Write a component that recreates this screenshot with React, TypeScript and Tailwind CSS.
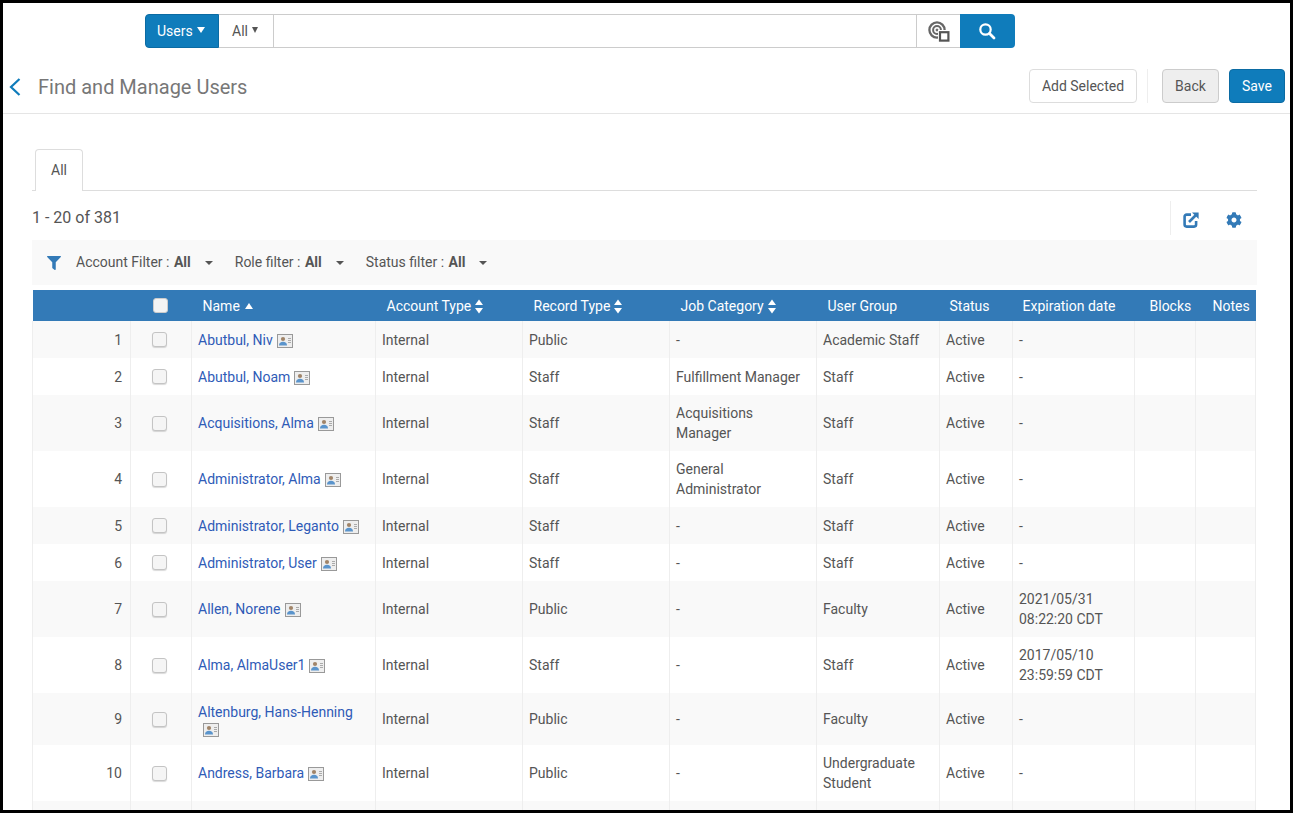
import { FaCog, FaFilter } from 'react-icons/fa';

type UserRow = {
  name: string;
  record: string;
  job: string;
  group: string;
  expiry: string;
  height: string;
  wrapIcon?: boolean;
};

const users: UserRow[] = [
  { name: 'Abutbul, Niv', record: 'Public', job: '-', group: 'Academic Staff', expiry: '-', height: 'h-[37px]' },
  { name: 'Abutbul, Noam', record: 'Staff', job: 'Fulfillment Manager', group: 'Staff', expiry: '-', height: 'h-[37px]' },
  { name: 'Acquisitions, Alma', record: 'Staff', job: 'Acquisitions Manager', group: 'Staff', expiry: '-', height: 'h-[56px]' },
  { name: 'Administrator, Alma', record: 'Staff', job: 'General Administrator', group: 'Staff', expiry: '-', height: 'h-[56px]' },
  { name: 'Administrator, Leganto', record: 'Staff', job: '-', group: 'Staff', expiry: '-', height: 'h-[37px]' },
  { name: 'Administrator, User', record: 'Staff', job: '-', group: 'Staff', expiry: '-', height: 'h-[37px]' },
  { name: 'Allen, Norene', record: 'Public', job: '-', group: 'Faculty', expiry: '2021/05/31 08:22:20 CDT', height: 'h-[56px]' },
  { name: 'Alma, AlmaUser1', record: 'Staff', job: '-', group: 'Staff', expiry: '2017/05/10 23:59:59 CDT', height: 'h-[56px]' },
  { name: 'Altenburg, Hans-Henning', record: 'Public', job: '-', group: 'Faculty', expiry: '-', height: 'h-[52px]', wrapIcon: true },
  { name: 'Andress, Barbara', record: 'Public', job: '-', group: 'Undergraduate Student', expiry: '-', height: 'h-[56px]' },
];

function IdCard() {
  return (
    <svg width="16" height="14" viewBox="0 0 16 14" className="inline-block align-[-3px]">
      <rect x="0.5" y="0.5" width="15" height="13" fill="#eeeeee" stroke="#999" />
      <circle cx="6" cy="5" r="2.1" fill="#a08468" />
      <path d="M2 11.5c0-2.5 1.6-3.7 4-3.7s4 1.2 4 3.7z" fill="#5a94cc" />
      <path d="M11 4.5h3M11 6.5h3M11 8.5h3" stroke="#aaa" />
    </svg>
  );
}

function SortArrows() {
  return (
    <svg width="8" height="15" viewBox="0 0 8 15" className="ml-1 inline-block align-[-3px]" fill="#fff">
      <path d="M4 0.5 8 6H0z" />
      <path d="M0 9h8l-4 5.5z" />
    </svg>
  );
}

function Checkbox({ header }: { header?: boolean }) {
  return (
    <span
      className={
        header
          ? 'block h-[15px] w-[15px] rounded-[3px] border border-[#ccc] bg-[#f4f4f4]'
          : 'block h-[15px] w-[15px] rounded-[3px] border border-[#c4c4c4] bg-[#f5f5f5] shadow-[0_1px_1px_rgba(0,0,0,0.15)]'
      }
    />
  );
}

function FilterItem({ label }: { label: string }) {
  return (
    <span className="flex items-center">
      <span>
        {label} : <b className="ml-px font-bold">All</b>
      </span>
      <span className="ml-[14px] h-0 w-0 border-x-[4px] border-t-[4px] border-x-transparent border-t-[#555]" />
    </span>
  );
}

function Th({ label, sort, className }: { label: string; sort?: boolean; className?: string }) {
  return (
    <th className={`whitespace-nowrap pt-px text-left font-normal ${className ?? 'px-[11px]'}`}>
      {label}
      {sort && <SortArrows />}
    </th>
  );
}

const cell = 'border-r border-[#eee] align-middle leading-[20px]';
const td = `${cell} px-[6px]`;

export default function App() {
  return (
    <div className="h-[813px] w-[1293px] overflow-hidden border-[3px] border-black bg-white font-['Roboto',sans-serif] text-[14px] text-[#555]">
      {/* search */}
      <div className="ml-[142px] mt-[11px] flex h-[34px] w-[870px]">
        <div className="flex w-[74px] items-center gap-[4px] rounded-l-[4px] border border-[#0b6ba3] bg-[#0f7cbb] pl-[11px] text-white">
          Users
          <span className="mb-[3px] h-0 w-0 border-x-[4px] border-t-[6px] border-x-transparent border-t-white" />
        </div>
        <div className="flex w-[55px] items-center gap-[4px] border-y border-r border-[#ccc] pl-[13px]">
          All
          <span className="mb-[3px] h-0 w-0 border-x-[3.5px] border-t-[6px] border-x-transparent border-t-[#555]" />
        </div>
        <div className="flex-1 border-y border-[#ccc]" />
        <div className="flex w-[44px] items-center justify-center border border-r-0 border-[#ccc]">
          <svg width="22" height="21" viewBox="0 0 22 21" fill="none" stroke="#666">
            <circle cx="9" cy="9" r="7.6" strokeWidth="2.3" />
            <circle cx="9" cy="9" r="3.9" strokeWidth="2" />
            <circle cx="9" cy="9" r="1" fill="#666" strokeWidth="1" />
            <rect x="10" y="9" width="12" height="12" fill="#fff" stroke="none" />
            <rect x="12" y="11.2" width="8.4" height="8.4" fill="#fff" stroke="#555" strokeWidth="2.2" />
          </svg>
        </div>
        <div className="flex w-[55px] items-center justify-center rounded-r-[4px] bg-[#0f7cbb]">
          <svg width="18" height="18" viewBox="0 0 18 18" fill="none" stroke="#fff" className="mr-[2px]">
            <circle cx="7.5" cy="7.5" r="5.2" strokeWidth="2.2" />
            <path d="M11.5 11.5 16 16" strokeWidth="2.8" strokeLinecap="round" />
          </svg>
        </div>
      </div>

      {/* title bar */}
      <div className="mt-[21px] flex h-[45px] items-start border-b border-[#e5e5e5] pr-[5px]">
        <svg width="12" height="18" viewBox="0 0 12 18" fill="none" stroke="#0f7cbb" strokeWidth="2.2" className="ml-[6px] mt-[9px]">
          <path d="M10.5 1 2 9l8.5 8" />
        </svg>
        <h1 className="ml-[17px] mt-[4px] text-[20px] font-normal leading-[28px] text-[#777]">Find and Manage Users</h1>
        <div className="ml-auto flex h-[34px] items-center">
          <button className="h-full w-[108px] rounded-[4px] border border-[#ddd] bg-white">Add Selected</button>
          <span className="ml-[10px] mr-[14px] h-full w-px bg-[#eee]" />
          <button className="h-full w-[57px] rounded-[4px] border border-[#ccc] bg-[#eee]">Back</button>
          <button className="ml-[10px] h-full w-[56px] rounded-[4px] border border-[#0b6ba3] bg-[#0f7cbb] text-white">Save</button>
        </div>
      </div>

      <div className="ml-[29px] w-[1225px]">
        {/* tabs */}
        <div className="mt-[35px] flex h-[42px] border-b border-[#ddd] pl-[3px]">
          <div className="flex h-[42px] w-[48px] items-center justify-center rounded-t-[4px] border border-b-0 border-[#ddd] bg-white">
            All
          </div>
        </div>

        {/* count and actions */}
        <div className="mt-[10px] flex h-[34px] items-start">
          <span className="mt-[5px] text-[16px] leading-[24px]">1 - 20 of 381</span>
          <div className="ml-auto flex h-full items-center border-l border-[#eee] pl-[12px] pr-[15px] text-[#337ab7]">
            <svg width="16" height="16" viewBox="0 0 16 16" fill="none" stroke="#337ab7" className="mt-[3px]">
              <path d="M8 2.6H3.6a2 2 0 0 0-2 2v8a2 2 0 0 0 2 2h7.5a2 2 0 0 0 2-2V9" strokeWidth="2.6" />
              <path d="M6 10 13 3" strokeWidth="2.6" />
              <path d="M9 0.4H15.6V7z" fill="#337ab7" stroke="none" />
            </svg>
            <FaCog size={16} className="ml-[27px] mt-[3px]" />
          </div>
        </div>

        {/* filters */}
        <div className="mt-[5px] flex h-[45px] items-center gap-[22px] bg-[#f9f9f9] pl-[15px]">
          <FaFilter size={14} className="mr-[-7px] text-[#337ab7]" />
          <FilterItem label="Account Filter" />
          <FilterItem label="Role filter" />
          <FilterItem label="Status filter" />
        </div>

        {/* table */}
        <table className="mt-[5px] w-[1223px] table-fixed border-collapse">
          <colgroup>
            <col className="w-[98px]" />
            <col className="w-[61px]" />
            <col className="w-[184px]" />
            <col className="w-[147px]" />
            <col className="w-[147px]" />
            <col className="w-[147px]" />
            <col className="w-[123px]" />
            <col className="w-[73px]" />
            <col className="w-[122px]" />
            <col className="w-[61px]" />
            <col className="w-[60px]" />
          </colgroup>
          <thead>
            <tr className="h-[31px] bg-[#337ab7] text-white">
              <th />
              <th className="pl-[22px]">
                <Checkbox header />
              </th>
              <th className="whitespace-nowrap px-[11px] pt-px text-left font-normal">
                Name
                <span className="mb-[2px] ml-[5px] inline-block h-0 w-0 border-x-[4px] border-b-[6px] border-x-transparent border-b-white" />
              </th>
              <Th label="Account Type" sort />
              <Th label="Record Type" sort />
              <Th label="Job Category" sort />
              <Th label="User Group" />
              <Th label="Status" className="px-[10px]" />
              <Th label="Expiration date" className="px-[10px]" />
              <Th label="Blocks" className="px-[15px]" />
              <Th label="Notes" className="px-[17px]" />
            </tr>
          </thead>
          <tbody>
            {users.map((u, i) => (
              <tr key={u.name} className={`${u.height} ${i % 2 === 0 ? 'bg-[#f9f9f9]' : 'bg-white'}`}>
                <td className={`${cell} border-l pr-[8px] text-right`}>{i + 1}</td>
                <td className={`${cell} pl-[21px]`}>
                  <Checkbox />
                </td>
                <td className={td}>
                  <a className="text-[#2f5bb7]">{u.name}</a>
                  {u.wrapIcon ? (
                    <div className="ml-[5px] h-[15px] leading-[14px]">
                      <IdCard />
                    </div>
                  ) : (
                    <span className="ml-[4px]">
                      <IdCard />
                    </span>
                  )}
                </td>
                <td className={td}>Internal</td>
                <td className={td}>{u.record}</td>
                <td className={td}>{u.job}</td>
                <td className={td}>{u.group}</td>
                <td className={td}>Active</td>
                <td className={td}>{u.expiry}</td>
                <td className={td} />
                <td className={td} />
              </tr>
            ))}
            <tr className="h-[37px] bg-[#f9f9f9]">
              <td className={`${td} border-l`} />
              <td className={td} />
              <td className={td} />
              <td className={td} />
              <td className={td} />
              <td className={td} />
              <td className={td} />
              <td className={td} />
              <td className={td} />
              <td className={td} />
              <td className={td} />
            </tr>
          </tbody>
        </table>
      </div>
    </div>
  );
}
